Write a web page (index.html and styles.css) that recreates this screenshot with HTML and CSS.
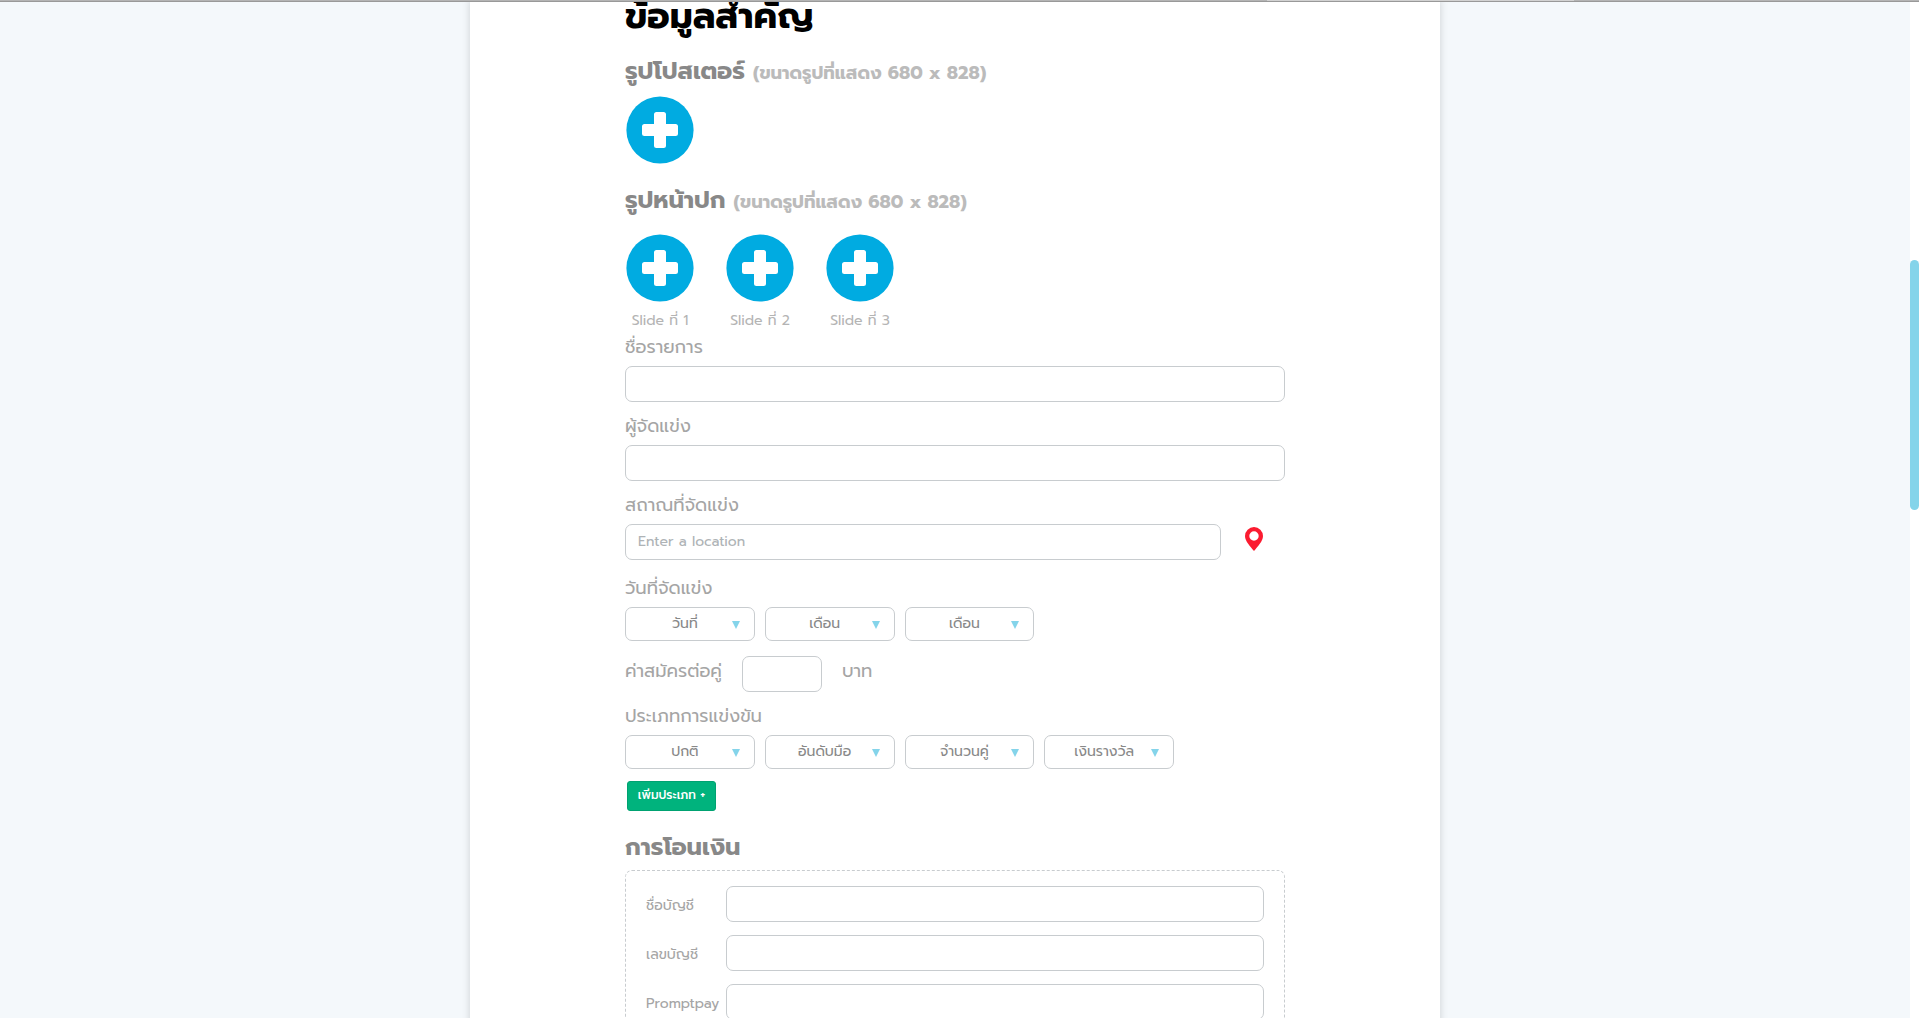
FILE: index.html
```html
<!DOCTYPE html>
<html lang="th">
<head>
<meta charset="utf-8">
<title>ข้อมูลสำคัญ</title>
<meta name="viewport" content="width=device-width, initial-scale=1">
<link rel="stylesheet" href="styles.css">
</head>
<body>
<div class="topbar"></div>
<div class="scroll-track"><div class="scroll-thumb"></div></div>
<svg class="defs" width="0" height="0" aria-hidden="true">
  <symbol id="add" viewBox="0 0 68 68">
    <circle cx="34" cy="34" r="33.6" fill="#00abe1"/>
    <path fill="#fff" d="M30.500 16h7q2.500 0 2.500 2.500V28h9.500q2.500 0 2.500 2.500v7q0 2.500-2.500 2.500H40v9.500q0 2.500-2.500 2.500h-7q-2.500 0-2.500-2.500V40h-9.500q-2.500 0-2.500-2.500v-7q0-2.500 2.500-2.500H28v-9.500q0-2.500 2.500-2.500z"/>
  </symbol>
</svg>
<main class="page">
  <form class="form">
    <h1 class="title">ข้อมูลสำคัญ</h1>

    <h2 class="heading">รูปโปสเตอร์ <small class="hint">(ขนาดรูปที่แสดง 680 x 828)</small></h2>
    <div class="uploads">
      <div class="upload"><button type="button" class="add" aria-label="เพิ่มรูปโปสเตอร์"><svg><use href="#add"/></svg></button></div>
    </div>

    <h2 class="heading heading-cover">รูปหน้าปก <small class="hint">(ขนาดรูปที่แสดง 680 x 828)</small></h2>
    <div class="uploads uploads-cover">
      <div class="upload"><button type="button" class="add" aria-labelledby="s1"><svg><use href="#add"/></svg></button><span class="caption" id="s1">Slide ที่ 1</span></div>
      <div class="upload"><button type="button" class="add" aria-labelledby="s2"><svg><use href="#add"/></svg></button><span class="caption" id="s2">Slide ที่ 2</span></div>
      <div class="upload"><button type="button" class="add" aria-labelledby="s3"><svg><use href="#add"/></svg></button><span class="caption" id="s3">Slide ที่ 3</span></div>
    </div>

    <div class="field">
      <label class="label" for="name">ชื่อรายการ</label>
      <input class="input" id="name" type="text">
    </div>
    <div class="field">
      <label class="label" for="host">ผู้จัดแข่ง</label>
      <input class="input" id="host" type="text">
    </div>
    <div class="field field-place">
      <label class="label" for="place">สถาณที่จัดแข่ง</label>
      <div class="place">
        <input class="input" id="place" type="text" placeholder="Enter a location">
        <svg class="pin" viewBox="0 0 18 24" aria-hidden="true"><path fill="#fb1b30" fill-rule="evenodd" d="M9 0a9 9 0 0 1 9 9c0 5-5 10-9 15C5 19 0 14 0 9a9 9 0 0 1 9-9zm0 4.300a4.700 4.700 0 1 0 0 9.400A4.700 4.700 0 0 0 9 4.300z"/></svg>
      </div>
    </div>

    <div class="field">
      <label class="label" for="day">วันที่จัดแข่ง</label>
      <div class="selects">
        <div class="select"><select id="day"><option>วันที่</option></select></div>
        <div class="select"><select aria-label="เดือน"><option>เดือน</option></select></div>
        <div class="select"><select aria-label="เดือน"><option>เดือน</option></select></div>
      </div>
    </div>

    <div class="fee">
      <label class="label" for="fee">ค่าสมัครต่อคู่</label>
      <input class="input" id="fee" type="text">
      <span class="label">บาท</span>
    </div>

    <div class="field">
      <label class="label" for="type">ประเภทการแข่งขัน</label>
      <div class="selects">
        <div class="select"><select id="type"><option>ปกติ</option></select></div>
        <div class="select"><select aria-label="อันดับมือ"><option>อันดับมือ</option></select></div>
        <div class="select"><select aria-label="จำนวนคู่"><option>จำนวนคู่</option></select></div>
        <div class="select"><select aria-label="เงินรางวัล"><option>เงินรางวัล</option></select></div>
      </div>
    </div>
    <button type="button" class="more">เพิ่มประเภท +</button>

    <h2 class="heading heading-bank">การโอนเงิน</h2>
    <div class="bank">
      <label for="acc">ชื่อบัญชี</label><input class="input" id="acc" type="text">
      <label for="no">เลขบัญชี</label><input class="input" id="no" type="text">
      <label for="pp">Promptpay</label><input class="input" id="pp" type="text">
    </div>
  </form>
</main>
</body>
</html>
```
FILE: styles.css
```css
* { box-sizing: border-box; }
html { height: 100%; overflow: hidden; }
body {
  margin: 0;
  padding-right: 9px;
  background: #f4f8fb;
  color: #a5a5a5;
  font-family: Prompt, "Noto Sans Thai", Inter, "Noto Sans", sans-serif;
  font-size: 14px;
}
button, input, select { font: inherit; }
.defs { position: absolute; }
.topbar {
  position: fixed;
  inset: 0 0 auto;
  z-index: 2;
  height: 2px;
  background: linear-gradient(90deg, #b4b4b4 66%, #d2d2d2 66%, #d2d2d2 82%, #b4b4b4 82%);
  border-bottom: 1px solid #999;
}
.scroll-track {
  position: fixed;
  inset: 0 0 0 auto;
  width: 9px;
  background: #fff;
}
.scroll-thumb {
  height: 250px;
  margin-top: 260px;
  border-radius: 5px;
  background: #84d4ea;
}
.page {
  max-width: 970px;
  min-height: 100vh;
  margin: 0 auto;
  background: #fff;
  box-shadow: 0 0 8px rgba(0, 0, 0, .16);
}
.form { max-width: 660px; margin: 0 auto; }
.title {
  margin: 0;
  padding-bottom: 19px;
  color: #000;
  font-size: 36px;
  line-height: 32px;
}
.heading {
  margin: 0;
  color: #888;
  font-size: 24px;
  font-weight: 700;
  line-height: 40px;
  white-space: nowrap;
}
.heading-cover { padding-top: 16px; }
.heading-bank { padding: 16px 0 3px; }
.hint { color: #bbb; font-size: 18px; line-height: 1; }
.uploads { display: flex; gap: 30px; padding-top: 5px; }
.uploads-cover { padding-top: 14px; }
.upload { width: 70px; }
.add {
  display: block;
  width: 68px;
  height: 68px;
  margin: 0 auto;
  padding: 0;
  border: 0;
  background: none;
}
.add svg { display: block; width: 100%; height: 100%; }
.caption {
  display: block;
  padding-top: 5px;
  color: #b4b4b4;
  line-height: 28px;
  text-align: center;
  white-space: nowrap;
}
.field { padding-bottom: 12px; }
.field-place { padding-bottom: 16px; }
.label {
  display: block;
  padding-bottom: 6px;
  font-size: 18px;
  line-height: 25px;
}
.input {
  display: block;
  width: 100%;
  height: 36px;
  padding: 0 12px 2px;
  border: 1px solid #c8cccf;
  border-radius: 7px;
  background: #fff;
}
.input::placeholder { color: #aeb3b6; }
.place { display: flex; gap: 24px; padding-right: 22px; }
.pin { flex: none; width: 18px; height: 24px; margin-top: 3px; }
.selects {
  display: grid;
  grid-template-columns: repeat(4, 1fr);
  gap: 10px;
  max-width: 549px;
}
.select { position: relative; }
.select select {
  display: block;
  width: 100%;
  height: 34px;
  padding: 0 10px 2px 0;
  border: 1px solid #c8cccf;
  border-radius: 7px;
  background: #fff;
  color: #888;
  appearance: none;
  text-align: center;
  text-align-last: center;
}
.select::after {
  content: "";
  position: absolute;
  top: 14px;
  right: 15px;
  border: 4px solid transparent;
  border-top: 8px solid #84d4ea;
  border-bottom: 0;
  pointer-events: none;
}
.fee { display: flex; align-items: center; gap: 20px; padding: 3px 0 12px; }
.fee .input { width: 80px; }
.more {
  display: block;
  width: 89px;
  height: 30px;
  margin-left: 2px;
  padding: 0 0 2px;
  border: 1px solid #00a271;
  border-radius: 3px;
  background: #00b37d;
  color: #fff;
  font-size: 12px;
  font-weight: 500;
  white-space: nowrap;
}
.bank {
  display: grid;
  grid-template-columns: 80px 1fr;
  gap: 13px 0;
  align-items: center;
  padding: 15px 20px;
  border: 1px dashed #c8cccf;
  border-radius: 7px;
}
.bank label { padding-top: 2px; }
```
